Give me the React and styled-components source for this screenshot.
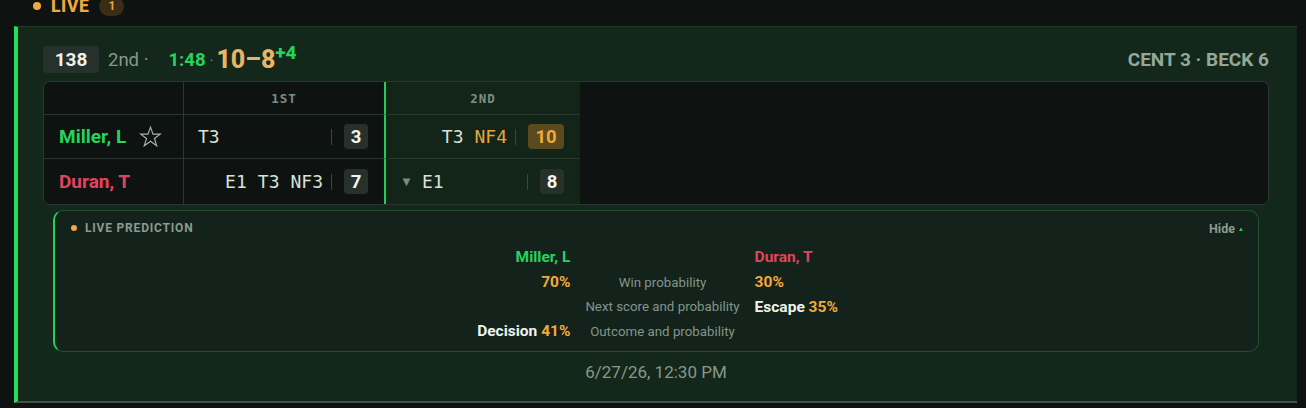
import React from 'react';
import styled, { createGlobalStyle } from 'styled-components';

const GlobalStyle = createGlobalStyle`
  html, body {
    margin: 0;
    padding: 0;
    background: #0e1312;
    height: 408px;
    overflow: hidden;
  }
  body {
    font-family: Roboto, "Liberation Sans", Arial, sans-serif;
    color: #dfe6e1;
  }
`;

const periods = [
  { key: '1st', label: '1ST' },
  { key: '2nd', label: '2ND', current: true },
];

const players = [
  {
    name: 'Miller, L',
    color: '#25d45c',
    starred: true,
    cells: {
      '1st': { tokens: [{ t: 'T3' }], score: 3, align: 'start' },
      '2nd': { tokens: [{ t: 'T3' }, { t: 'NF4', hot: true }], score: 10, hot: true },
    },
  },
  {
    name: 'Duran, T',
    color: '#e2445e',
    cells: {
      '1st': { tokens: [{ t: 'E1' }, { t: 'T3' }, { t: 'NF3' }], score: 7 },
      '2nd': { tokens: [{ t: 'E1' }], score: 8, align: 'start', marker: true },
    },
  },
];

const prediction = [
  { left: { name: 'Miller, L', color: '#25d45c' }, label: '', right: { name: 'Duran, T', color: '#e2445e' } },
  { left: { value: '70%' }, label: 'Win probability', right: { value: '30%' } },
  { left: null, label: 'Next score and probability', right: { text: 'Escape', value: '35%' } },
  { left: { text: 'Decision', value: '41%' }, label: 'Outcome and probability', right: null },
];

const StarIcon = () => (
  <svg width="23" height="23" viewBox="0 0 24 24" fill="none" stroke="#a9b3ae" strokeWidth="1.2" strokeLinejoin="miter">
    <path d="M12 2.2l2.6 7.3h7.7l-6.2 4.6 2.4 7.5L12 17l-6.5 4.6 2.4-7.5-6.2-4.6h7.7z" />
  </svg>
);

const App = () => (
  <Page>
    <GlobalStyle />
    <SectionHeader>
      <Dot $size={8} />
      <SectionTitle>LIVE</SectionTitle>
      <CountPill>1</CountPill>
    </SectionHeader>

    <MatchCard>
      <MatchTop>
        <MatchInfo>
          <BoutNumber>138</BoutNumber>
          <Muted>2nd ·</Muted>
          <Clock>1:48 <Muted as="span">·</Muted></Clock>
          <Score>
            10–8<Lead>+4</Lead>
          </Score>
        </MatchInfo>
        <Teams>CENT 3 · BECK 6</Teams>
      </MatchTop>

      <ScoreTable>
        <HeadCell $first />
        {periods.map(p => (
          <HeadCell key={p.key} $current={p.current}>{p.label}</HeadCell>
        ))}
        <Filler />
        {players.map((pl, i) => (
          <React.Fragment key={pl.name}>
            <NameCell $last={i === players.length - 1}>
              <PlayerName $color={pl.color}>{pl.name}</PlayerName>
              {pl.starred && <StarIcon />}
            </NameCell>
            {periods.map(p => {
              const c = pl.cells[p.key];
              return (
                <PeriodCell key={p.key} $current={p.current} $last={i === players.length - 1}>
                  <Tokens $align={c.align}>
                    {c.marker && <Marker>▼</Marker>}
                    {c.tokens.map(tk => (
                      <Token key={tk.t} $hot={tk.hot}>{tk.t}</Token>
                    ))}
                  </Tokens>
                  <Divider />
                  <PointBadge $hot={c.hot}>{c.score}</PointBadge>
                </PeriodCell>
              );
            })}
          </React.Fragment>
        ))}
      </ScoreTable>

      <PredictionPanel>
        <PanelHead>
          <PanelTitle>
            <Dot $size={6} />
            LIVE PREDICTION
          </PanelTitle>
          <HideButton>Hide <Caret>▲</Caret></HideButton>
        </PanelHead>
        <PredictionGrid>
          {prediction.map((row, i) => (
            <React.Fragment key={i}>
              <Side $align="right">{renderSide(row.left)}</Side>
              <Label>{row.label}</Label>
              <Side $align="left">{renderSide(row.right)}</Side>
            </React.Fragment>
          ))}
        </PredictionGrid>
      </PredictionPanel>

      <Timestamp>6/27/26, 12:30 PM</Timestamp>
    </MatchCard>
  </Page>
);

const renderSide = (s) => {
  if (!s) return null;
  if (s.name) return <PlayerName $color={s.color} $small>{s.name}</PlayerName>;
  return (
    <>
      {s.text && <StrongText>{s.text} </StrongText>}
      <Percent>{s.value}</Percent>
    </>
  );
};

// Layout
const Page = styled.div`
  display: flex;
  flex-direction: column;
`;

const SectionHeader = styled.div`
  display: flex;
  align-items: center;
  gap: 10px;
  height: 26px;
  margin-top: -7px;
  margin-bottom: 7px;
  padding-left: 33px;
`;

const Dot = styled.span`
  width: ${p => p.$size}px;
  height: ${p => p.$size}px;
  border-radius: 50%;
  background: #f2a93b;
  flex-shrink: 0;
`;

const SectionTitle = styled.span`
  font-size: 17.5px;
  font-weight: 800;
  letter-spacing: 0.6px;
  color: #f2a93b;
`;

const CountPill = styled.span`
  display: inline-flex;
  align-items: center;
  justify-content: center;
  min-width: 25px;
  height: 19px;
  border-radius: 10px;
  background: #3a2d15;
  color: #e9a43c;
  font-size: 12px;
  font-weight: 700;
`;

const MatchCard = styled.div`
  margin: 0 9px 0 14px;
  background: #13281a;
  border-left: 4px solid #22dd5f;
  border-top: 1px solid #24392b;
  border-bottom: 2px solid #465249;
  padding: 19px 28px 19px 25px;
  display: flex;
  flex-direction: column;
`;

const MatchTop = styled.div`
  display: flex;
  align-items: center;
  justify-content: space-between;
  height: 27px;
  margin-bottom: 8px;
`;

const MatchInfo = styled.div`
  display: flex;
  align-items: center;
  gap: 9px;
`;

const BoutNumber = styled.span`
  display: inline-flex;
  align-items: center;
  justify-content: center;
  width: 56px;
  height: 27px;
  border-radius: 4px;
  background: #26302c;
  color: #eef2ef;
  font-size: 19px;
  font-weight: 700;
`;

const Muted = styled.span`
  color: #87978d;
  font-size: 18.5px;
  margin-right: 11px;
`;

const Clock = styled.span`
  color: #25d45c;
  font-size: 18.5px;
  font-weight: 700;
  display: inline-flex;
  align-items: baseline;
  gap: 4px;

  ${Muted} {
    font-size: 15px;
    margin: 0;
    font-weight: 400;
  }
`;

const Score = styled.span`
  position: relative;
  margin-left: -6px;
  color: #ebb363;
  font-size: 25px;
  font-weight: 800;
  line-height: 1;
`;

const Lead = styled.sup`
  position: relative;
  top: -4px;
  margin-left: 0;
  font-size: 19px;
  color: #25d45c;
  vertical-align: top;
`;

const Teams = styled.span`
  color: #93a898;
  font-size: 19px;
  font-weight: 700;
`;

// Score table
const ScoreTable = styled.div`
  display: grid;
  grid-template-columns: 140px 200px 196px 1fr;
  grid-template-rows: 33px 44px 45px;
  border: 1px solid #2a3830;
  border-radius: 7px;
  background: #0e1312;
  overflow: hidden;
`;

const HeadCell = styled.div`
  display: flex;
  align-items: center;
  justify-content: center;
  border-bottom: 1px solid #2a3830;
  border-right: ${p => (p.$first ? '1px solid #2a3830' : 'none')};
  border-left: ${p => (p.$current ? '2px solid #22cc58' : 'none')};
  background: ${p => (p.$current ? '#132419' : 'transparent')};
  font-family: "DejaVu Sans Mono", "Liberation Mono", monospace;
  font-size: 12.5px;
  font-weight: 700;
  letter-spacing: 1px;
  color: #7d8d84;
`;

const Filler = styled.div`
  grid-column: 4;
  grid-row: 1 / span 3;
`;

const NameCell = styled.div`
  display: flex;
  align-items: center;
  gap: 13px;
  padding-left: 15px;
  border-right: 1px solid #2a3830;
  border-bottom: ${p => (p.$last ? 'none' : '1px solid #2a3830')};
`;

const PlayerName = styled.span`
  color: ${p => p.$color};
  font-size: ${p => (p.$small ? '15.5px' : '19px')};
  font-weight: 700;
`;

const PeriodCell = styled.div`
  display: flex;
  align-items: center;
  padding: 0 16px 0 14px;
  border-bottom: ${p => (p.$last ? 'none' : '1px solid #2a3830')};
  border-left: ${p => (p.$current ? '2px solid #22cc58' : 'none')};
  background: ${p => (p.$current ? '#132419' : 'transparent')};
`;

const Tokens = styled.div`
  flex: 1;
  display: flex;
  align-items: center;
  justify-content: ${p => (p.$align === 'start' ? 'flex-start' : 'flex-end')};
  gap: 11px;
  margin-right: 8px;
`;

const Marker = styled.span`
  font-size: 13px;
  color: #7c8a82;
  margin-right: -2px;
`;

const Token = styled.span`
  font-family: "DejaVu Sans Mono", "Liberation Mono", monospace;
  font-size: 18px;
  color: ${p => (p.$hot ? '#e9a43c' : '#d9e1dc')};
`;

const Divider = styled.span`
  width: 1px;
  height: 16px;
  background: #3a4640;
  margin-right: 12px;
`;

const PointBadge = styled.span`
  display: inline-flex;
  align-items: center;
  justify-content: center;
  min-width: 24px;
  height: 25px;
  padding: 0 ${p => (p.$hot ? '6px' : '0')};
  border-radius: 4px;
  background: ${p => (p.$hot ? '#5b4a1d' : '#28302c')};
  color: ${p => (p.$hot ? '#f0a83a' : '#f2f5f3')};
  font-size: 18.5px;
  font-weight: 700;
`;

// Prediction panel
const PredictionPanel = styled.div`
  margin: 5px 10px 0;
  height: 142px;
  box-sizing: border-box;
  border: 1px solid #22502f;
  border-left: 2px solid #24d05a;
  border-radius: 10px;
  background: #13221a;
  padding: 9px 14px 0 16px;
`;

const PanelHead = styled.div`
  display: flex;
  align-items: center;
  justify-content: space-between;
  height: 16px;
  margin-bottom: 9px;
`;

const PanelTitle = styled.span`
  display: flex;
  align-items: center;
  gap: 8px;
  font-size: 12px;
  font-weight: 700;
  letter-spacing: 0.8px;
  color: #8b9b91;
`;

const HideButton = styled.span`
  font-size: 12.5px;
  font-weight: 700;
  color: #8b9b91;
`;

const Caret = styled.span`
  font-size: 6px;
  color: #25d45c;
  vertical-align: 2px;
`;

const PredictionGrid = styled.div`
  display: grid;
  grid-template-columns: 1fr auto 1fr;
  grid-auto-rows: 24.7px;
  column-gap: 15px;
  align-items: center;
  padding: 0 14px 0 24px;
`;

const Side = styled.div`
  text-align: ${p => p.$align};
  font-size: 15.5px;
  font-weight: 700;
`;

const Label = styled.div`
  text-align: center;
  font-size: 13.3px;
  color: #84958b;
`;

const StrongText = styled.span`
  color: #eef2ef;
`;

const Percent = styled.span`
  color: #f2a93b;
`;

const Timestamp = styled.div`
  margin-top: 10px;
  line-height: 20px;
  text-align: center;
  font-size: 17px;
  color: #87978d;
`;

export default App;
